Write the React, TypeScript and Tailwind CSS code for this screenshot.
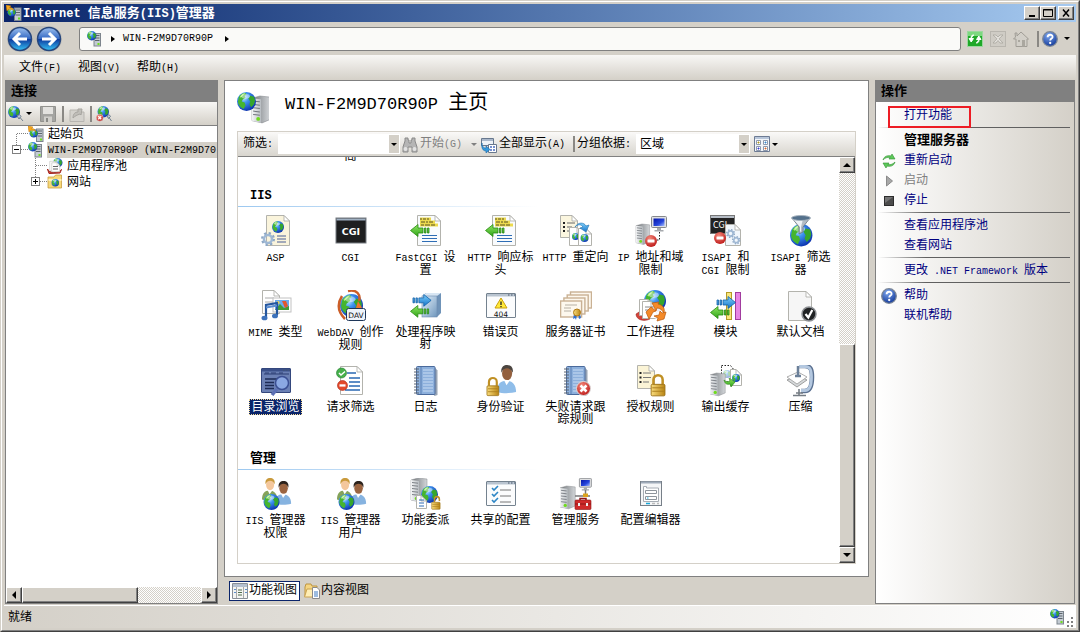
import React from "react";

type Kids = { children?: React.ReactNode };
type At = { x?: number; y?: number; s?: number };

/* Latin runs are set smaller so that each letter takes half the width of a Chinese one. */
function T({ t, latin = "text-[10px]" }: { t: string; latin?: string }) {
  return (
    <span className="whitespace-pre">
      {t.split(/([\x20-\x7e]+)/).map((p, i) =>
        i % 2 ? (
          <span key={i} className={latin}>
            {p}
          </span>
        ) : (
          p
        ),
      )}
    </span>
  );
}

/* ---------- drawing parts ---------- */

function Defs() {
  return (
    <svg className="absolute h-0 w-0" aria-hidden="true">
      <defs>
        <radialGradient id="sea" cx="0.35" cy="0.3" r="0.75">
          <stop offset="0" stopColor="#cdeeff" />
          <stop offset="0.35" stopColor="#3f95f0" />
          <stop offset="1" stopColor="#0a2fac" />
        </radialGradient>
        <linearGradient id="steel" x1="0" x2="1">
          <stop offset="0" stopColor="#f4f5f6" />
          <stop offset="1" stopColor="#b9bec3" />
        </linearGradient>
        <linearGradient id="side" x1="0" x2="1">
          <stop offset="0" stopColor="#6f7478" />
          <stop offset="1" stopColor="#d3d6d9" />
        </linearGradient>
        <linearGradient id="gold" x1="0" x2="1">
          <stop offset="0" stopColor="#f9dc7c" />
          <stop offset="1" stopColor="#b88413" />
        </linearGradient>
        <linearGradient id="nav" x1="0" x2="0" y1="0" y2="1">
          <stop offset="0" stopColor="#9dc0ee" />
          <stop offset="0.48" stopColor="#3469c4" />
          <stop offset="0.52" stopColor="#0d3b9f" />
          <stop offset="1" stopColor="#36c3f5" />
        </linearGradient>
        <linearGradient id="green" x1="0" x2="0" y1="0" y2="1">
          <stop offset="0" stopColor="#8fe663" />
          <stop offset="1" stopColor="#2fa317" />
        </linearGradient>
        <linearGradient id="blue" x1="0" x2="0" y1="0" y2="1">
          <stop offset="0" stopColor="#7fd0fb" />
          <stop offset="1" stopColor="#1373c9" />
        </linearGradient>
        <linearGradient id="cube" x1="0" x2="1" y1="0" y2="1">
          <stop offset="0" stopColor="#e6f1fb" />
          <stop offset="1" stopColor="#6f97bd" />
        </linearGradient>
        <linearGradient id="screen" x1="0" x2="1" y1="0" y2="1">
          <stop offset="0" stopColor="#0516a8" />
          <stop offset="0.6" stopColor="#2746dc" />
          <stop offset="1" stopColor="#a9c2ff" />
        </linearGradient>
        <radialGradient id="red" cx="0.4" cy="0.3" r="0.8">
          <stop offset="0" stopColor="#f58a7c" />
          <stop offset="1" stopColor="#b80f0f" />
        </radialGradient>
        <radialGradient id="help" cx="0.4" cy="0.25" r="0.8">
          <stop offset="0" stopColor="#7fa8ef" />
          <stop offset="1" stopColor="#0e3596" />
        </radialGradient>
      </defs>
    </svg>
  );
}

function Icon({ size = 32, children }: Kids & { size?: 16 | 32 }) {
  return (
    <svg
      viewBox="0 0 32 32"
      className={size === 16 ? "h-4 w-4 shrink-0" : "h-8 w-8 shrink-0"}
      aria-hidden="true"
    >
      {children}
    </svg>
  );
}

const place = ({ x = 0, y = 0, s = 1 }: At) => `translate(${x} ${y}) scale(${s})`;

const Globe = (p: At) => (
  <g transform={place(p)}>
    <circle cx="10" cy="10" r="10" fill="url(#sea)" />
    <path d="M2 5C4 2 7 1 9 1l1 2-2 1 1 2-3 2-1 2 3 1 1 3-2 4C3 16 1 13 1 10z" fill="#46b52f" />
    <path d="M14 4l4 1 1 4-1 4-3 3-2-3 1-3-2-3z" fill="#36a62c" />
    <path d="M3 5c2-3 4-4 6-4L7 3 4 6z" fill="#b4f088" />
    <ellipse cx="9" cy="4.500" rx="4.500" ry="2.500" fill="#fff" opacity="0.45" />
  </g>
);

const Server = (p: At) => (
  <g transform={place(p)}>
    <path d="M0 2L7 0l9 1v20l-7 3-9-2z" fill="url(#side)" stroke="#85898d" strokeWidth="0.5" />
    <path d="M0 2l8 1v21l-8-2z" fill="url(#steel)" />
    <path d="M1 4.500l6 .7M1 7.500l6 .7M1 10.500l6 .7M1 13.500l6 .7M1 16.500l6 .7" stroke="#71767c" strokeWidth="0.9" />
    <circle cx="5.500" cy="20.500" r="1.700" fill="#6fdc1c" />
  </g>
);

const Page = ({ x = 0, y = 0, w = 20, h = 26, fill = "#fff" }: At & { w?: number; h?: number; fill?: string }) => (
  <g transform={`translate(${x} ${y})`}>
    <path d={`M.5.5H${w - 6}L${w - 0.5} 6V${h - 0.5}H.5z`} fill={fill} stroke="#b3b3ad" />
    <path d={`M${w - 6} .5V6H${w - 0.5}z`} fill="#fff" stroke="#a9a9a4" strokeWidth="0.8" />
  </g>
);

const Arrow = ({ left = false, x = 0, y = 0, s = 1, fill = "url(#blue)", line = "#1160a8" }: At & { left?: boolean; fill?: string; line?: string }) => (
  <g transform={`translate(${left ? x + 20 * s : x} ${y}) scale(${left ? -s : s} ${s})`}>
    <path d="M1 4v5h1.500V4zM4 4v5h1.500V4zM7 4v5h5v3.500L19.500 6.500 12 .5V4z" fill={fill} stroke={line} strokeWidth="0.8" />
  </g>
);
const GreenLeft = (p: At) => <Arrow left fill="url(#green)" line="#27890f" {...p} />;

const NoEntry = (p: At) => (
  <g transform={place(p)}>
    <circle cx="6" cy="6" r="6" fill="url(#red)" />
    <rect x="2.500" y="4.500" width="7" height="3" rx="0.5" fill="#fff" />
  </g>
);

const Cross = (p: At) => (
  <g transform={place(p)}>
    <circle cx="7.500" cy="7.500" r="7" fill="url(#red)" stroke="#ddd" />
    <path d="M4.500 4.500l6 6M10.500 4.500l-6 6" stroke="#fff" strokeWidth="2.500" />
  </g>
);

const Lock = (p: At & { open?: boolean }) => (
  <g transform={place(p)}>
    <path d={p.open ? "M5 9V5a3 3.500 0 0 1 7 0v2" : "M3 9V5a4 4 0 0 1 8 0v4"} fill="none" stroke="#c09024" strokeWidth="2.200" />
    <rect x="1" y="9" width="12" height="10" rx="1" fill="url(#gold)" stroke="#9a6f12" strokeWidth="0.8" />
    <path d="M2 12h10M2 15h10" stroke="#a87b1c" strokeWidth="0.8" />
  </g>
);

const Monitor = (p: At) => (
  <g transform={place(p)}>
    <rect x="0.500" y="0.500" width="15" height="11" rx="1" fill="#dfe0e2" stroke="#85888c" />
    <rect x="2.500" y="2.500" width="11" height="7.500" fill="url(#screen)" />
    <path d="M6 12h4v2h2.500v1.500h-9V14H6z" fill="#a6a9ad" />
  </g>
);

const Person = ({ skin, hair, coat, ...p }: At & { skin: string; hair: string; coat: string }) => (
  <g transform={place(p)}>
    <path d="M0 24c0-7 3-10 8-10s9 3 9 10c-5 1.500-12 1.500-17 0z" fill={coat} />
    <path d="M6 13l2.500 5L12 13z" fill="#fff" />
    <ellipse cx="9" cy="7.500" rx="4.500" ry="6" fill={skin} />
    <path d="M4 7C3 2 6 0 9 0s6 2 5 7c-1-3-3-4-5-4S5 4 4 7z" fill={hair} />
  </g>
);

const Frame = ({ fill = "#fbfcfd", line = "#74828f", head = "#b9c4d0" }: { fill?: string; line?: string; head?: string }) => (
  <g>
    <rect x="1.500" y="3.500" width="29" height="24" rx="0.5" fill={fill} stroke={line} />
    <rect x="2" y="4" width="28" height="2.500" fill={head} />
    <path d="M23 5h1.500M26 5h1.500M29 5h1" stroke="#44546a" />
  </g>
);

const Notebook = () => (
  <g>
    <path d="M7 2.500h18l2.500 3V30l-3 1z" fill="#98a4b4" />
    <rect x="6.500" y="1.500" width="18.500" height="28" rx="1" fill="#8db0dc" stroke="#4a6a9c" />
    <path d="M11 2v27" stroke="#5b80b4" />
    <path d="M13 5h10M13 8h10M13 11h10M13 14h10M13 17h10M13 20h10M13 23h10M13 26h10" stroke="#c8dcf4" />
    <path d="M4 4h5M4 7h5M4 10h5M4 13h5M4 16h5M4 19h5M4 22h5M4 25h5M4 28h5" stroke="#5a6472" strokeWidth="1.200" />
  </g>
);

const Gear = (p: At) => (
  <g transform={place(p)} fill="none">
    <circle cx="7" cy="7" r="5.700" stroke="#8da7c4" strokeWidth="2.600" strokeDasharray="2.200 2.270" />
    <circle cx="7" cy="7" r="4" stroke="#9fb8d4" strokeWidth="2.600" />
  </g>
);

const YellowPage = () => (
  <g>
    <Page x={7} y={0} w={24} h={31} fill="#f9fbfd" />
    <path d="M10 4h11M10 7h15M10 10h18" stroke="#ecd94e" strokeWidth="2.800" />
    <path d="M10 4h2m1 0h3m1 0h2M11 7h4m1 0h2m1 0h4M11 10h3m1 0h5m1 0h4" stroke="#5a5322" strokeWidth="1" />
    <path d="M12 20.500h15M12 23.500h15M12 26.500h15" stroke="#2e6db5" strokeWidth="1.200" />
    <GreenLeft x={0} y={9} />
  </g>
);

const Admins = () => (
  <g>
    <Person x={2} y={0} s={0.9} skin="#f4c79c" hair="#c99a3c" coat="#84a35a" />
    <Person x={15} y={3} s={0.95} skin="#9b6440" hair="#2c221c" coat="#86b3e0" />
    <Globe x={3.500} y={16} s={0.8} />
  </g>
);

const iisParts = (
  <g>
    <Server x={15} y={4} s={1.120} />
    <Globe x={0} y={0} s={0.95} />
  </g>
);

const Iis = ({ size }: { size: 16 | 32 }) => <Icon size={size}>{iisParts}</Icon>;

/* Simplified server for small sizes, where the isometric one would blur. */
const TinyServer = ({ x, y }: { x: number; y: number }) => (
  <g transform={`translate(${x} ${y})`}>
    <rect x="1" y="1" width="13" height="25" fill="#c3cbd3" stroke="#7d858d" strokeWidth="2" />
    <path d="M3 5h9M3 10h9M3 15h9" stroke="#5c646c" strokeWidth="2" />
    <rect x="8" y="20" width="4" height="4" fill="#6fe01c" />
  </g>
);

const IisSmall = () => (
  <Icon size={16}>
    <TinyServer x={13} y={4} />
    <Globe x={0} y={0} s={0.95} />
  </Icon>
);

const IisStart = () => (
  <Icon size={16}>
    <TinyServer x={16} y={5} />
    <Globe x={3} y={6} s={0.85} />
    <path d="M0 0l10 2-3 3c5 0 8 2 9 6-4-3-8-3-11-2l-3 3z" fill="#f5a81c" stroke="#c07608" />
  </Icon>
);

const HelpIcon = () => (
  <svg viewBox="0 0 16 16" className="h-4 w-4 shrink-0" aria-hidden="true">
    <circle cx="8" cy="8" r="7.300" fill="url(#help)" stroke="#7b8697" strokeWidth="1.300" />
    <path d="M5.600 6.200C5.600 3 10.600 3 10.600 5.900 10.600 7.600 8.200 7.600 8.200 9.500" fill="none" stroke="#fff" strokeWidth="1.800" />
    <circle cx="8.200" cy="12" r="1.150" fill="#fff" />
  </svg>
);

/* ---------- feature icons ---------- */

const art: Record<string, React.ReactNode> = {
  asp: (
    <g>
      <Page x={6} y={0} w={24} h={31} fill="#faf4dc" />
      <Globe x={12} y={6} s={0.6} />
      <path d="M17 21h9M17 24h9M17 27h9" stroke="#4b5f95" strokeWidth="1.200" />
      <Gear x={1} y={17} />
    </g>
  ),
  cgi: (
    <g>
      <rect x="1" y="3" width="30" height="25" fill="#1e1f20" stroke="#777c82" />
      <rect x="1.500" y="3.500" width="29" height="2" fill="#9fb0c2" />
      <text x="16" y="20" textAnchor="middle" fill="#fff" fontFamily="DejaVu Sans" fontWeight="700" fontSize="9.500">CGI</text>
    </g>
  ),
  yellow: <YellowPage />,
  redirect: (
    <g>
      <Page x={0} y={0} w={18} h={23} fill="#fbf6df" />
      <path d="M7 8h8M7 12h5M7 16h3" stroke="#666" />
      <path d="M3 8h2M3 12h2M3 16h2" stroke="#222" strokeWidth="2" />
      <Page x={9} y={12} w={14} h={19} />
      <Globe x={12} y={18} s={0.35} />
      <Page x={18} y={13} w={14} h={18} />
      <Globe x={20.500} y={19} s={0.4} />
      <path d="M15 12c3-5 9-5 11-1l3-1-3 7-6-4 3-1c-2-3-5-3-8 0z" fill="url(#blue)" stroke="#2f7bb8" strokeWidth="0.700" />
    </g>
  ),
  ip: (
    <g>
      <Server x={1} y={9} s={0.85} />
      <Monitor x={16} y={1} />
      <path d="M24.500 17v8h-5" stroke="#222" strokeDasharray="1.500 1.500" fill="none" />
      <NoEntry x={10} y={20} />
    </g>
  ),
  isapi: (
    <g>
      <rect x="0.500" y="0.500" width="24" height="18" fill="#222" stroke="#777" />
      <rect x="1" y="1" width="23" height="2" fill="#b6bdc6" />
      <text x="3" y="13" fill="#fff" fontFamily="DejaVu Sans" fontWeight="400" fontSize="8">CGI</text>
      <Page x={15} y={9} w={16} h={22} fill="#f2f7fc" />
      <Gear x={16} y={14} s={0.65} />
      <Gear x={22} y={21} s={0.6} />
      <NoEntry x={4} y={17} />
    </g>
  ),
  filter: (
    <g>
      <Globe x={5} y={9} s={1.120} />
      <path d="M7 3l7 9v7l4-2v-5l7-9z" fill="#b3bcc5" stroke="#68727d" strokeWidth="0.800" />
      <path d="M9 5l6 7v5l1-1v-4l2-8z" fill="#eef2f5" />
      <ellipse cx="16" cy="3" rx="9.500" ry="2.500" fill="#54718c" stroke="#a8b4bf" />
    </g>
  ),
  mime: (
    <g>
      <Page x={2} y={0} w={18} h={24} />
      <path d="M5 8h9M5 12h9" stroke="#aaa" />
      <rect x="13" y="8" width="18" height="14" fill="#fff" stroke="#c2c2c2" />
      <rect x="15" y="10" width="14" height="10" fill="#6ba9ee" />
      <path d="M15 20l5-6 4 4 5-2v4z" fill="#419b37" />
      <path d="M22 11h4l2 5-3 2z" fill="#e2562e" />
      <circle cx="18" cy="12.500" r="1.500" fill="#f6dd4f" />
      <path d="M6 27V15l11-2v12" fill="none" stroke="#24569e" strokeWidth="2.200" />
      <path d="M6 17.500l11-2" stroke="#5b8dd0" strokeWidth="2" />
      <ellipse cx="4.500" cy="28" rx="3" ry="2.300" fill="#3d72bb" />
      <ellipse cx="15" cy="26" rx="3" ry="2.300" fill="#3d72bb" />
    </g>
  ),
  webdav: (
    <g>
      <Globe x={5} y={4} s={1.150} />
      <path d="M13 1c9-2 13 4 11 10M7 6C2 14 3 22 10 29" fill="none" stroke="#cc5e28" strokeWidth="2.500" />
      <path d="M21 18l2-7 4 7z" fill="#f0742d" />
      <rect x="11.500" y="18.500" width="19" height="12" rx="2" fill="#eef4fb" stroke="#1f3658" />
      <text x="21" y="27.500" textAnchor="middle" fontFamily="DejaVu Sans" fontSize="7.500" fill="#111">DAV</text>
    </g>
  ),
  handler: (
    <g>
      <path d="M12 6l4-3h15v20l-4 4H12z" fill="#6f93b8" />
      <path d="M12 6l4-3h15l-4 3z" fill="#d8e6f3" />
      <rect x="12" y="6" width="15" height="21" fill="url(#cube)" stroke="#6b8bad" strokeWidth="0.600" />
      <Arrow x={2} y={4} s={0.98} />
      <GreenLeft x={0} y={15} s={0.98} />
    </g>
  ),
  err: (
    <g>
      <Frame />
      <path d="M16 8l6 10H10z" fill="#ffe93a" stroke="#caa00c" strokeLinejoin="round" />
      <path d="M16 11.500v3.500M16 16v1.200" stroke="#222" strokeWidth="1.300" />
      <text x="16" y="26.500" textAnchor="middle" fontFamily="DejaVu Sans" fontSize="7.500" fill="#111">404</text>
    </g>
  ),
  certs: (
    <g>
      {[0, 1, 2, 3].map((i) => (
        <rect key={i} x={10.500 - i * 3.300} y={2 + i * 3} width="21" height="16" fill="#fdf8ee" stroke="#c9b194" strokeWidth="1.400" />
      ))}
      <path d="M5 15h12M4 18h7M4 21h7" stroke="#b6b0a4" />
      <path d="M14 24l-1 5 2-1 1 2 1-5zM18 24l1 5 2-1-1-4z" fill="#2f6fd0" />
      <circle cx="17" cy="22.500" r="3.500" fill="url(#gold)" stroke="#b17912" />
    </g>
  ),
  worker: (
    <g>
      <path d="M1 24c0 6 8 8 14 5l-3-3c-5 1-7-1-8-4z" fill="#d2433a" stroke="#8d1d17" strokeWidth="0.500" />
      <Globe x={9} y={0} s={1.100} />
      <Page x={4} y={9} w={15} h={17} />
      <Page x={7} y={11} w={15} h={18} />
      <path d="M10 17h8M10 20h6" stroke="#888" />
      <ellipse cx="23" cy="23" rx="7" ry="6" fill="#fff" opacity="0.9" />
      <path d="M17 13l7-1-1 2c5 1 7 4 6 9-2-3-4-5-7-5l-1 3z" fill="#f58a28" stroke="#b95708" strokeWidth="0.700" />
      <path d="M31 22l-2 7-7 2 1-3-4-2 5-1 1-4 2 2z" fill="#f58a28" stroke="#b95708" strokeWidth="0.700" />
      <path d="M14 29l-3-7 5-5 5 4-3 1c-1 2-2 4-4 7z" fill="#f58a28" stroke="#b95708" strokeWidth="0.700" />
    </g>
  ),
  modules: (
    <g>
      <rect x="16.500" y="2.500" width="5" height="27" fill="#f8e57d" stroke="#b49a26" />
      <rect x="25.500" y="2.500" width="5" height="27" fill="#e784e4" stroke="#a13c9e" />
      <Arrow x={6} y={6} />
      <GreenLeft x={0} y={16} />
    </g>
  ),
  defdoc: (
    <g>
      <Page x={3} y={1} w={24} h={30} fill="#f6f6f6" />
      <circle cx="24" cy="24" r="7" fill="#202224" stroke="#8d9094" strokeWidth="1.500" />
      <path d="M20.500 24l2.800 3.500 4-7.500" fill="none" stroke="#fff" strokeWidth="2.200" />
    </g>
  ),
  browse: (
    <g>
      <Frame fill="#6b80b4" line="#34477d" head="#3b5089" />
      <path d="M4 9h25M5 8h4m2 0h5m3 0h4" stroke="#2b3d72" />
      <path d="M5 14h12M5 17.500h9M5 20.500h9M5 23.500h9" stroke="#1d2b55" strokeWidth="1.300" />
      <path d="M17 24l-5 6" stroke="#5c70b4" strokeWidth="3.500" />
      <circle cx="22" cy="18" r="6.500" fill="#8ba8e2" stroke="#3b4f93" strokeWidth="1.500" />
    </g>
  ),
  reqfilter: (
    <g>
      <Page x={5} y={1} w={23} h={29} />
      <path d="M12 8h9M14 13h11M14 17h11M14 21h11M10 25h15" stroke="#2a68b2" strokeWidth="1.300" />
      <circle cx="6.500" cy="8" r="5" fill="#46b04b" stroke="#1f7a2a" strokeWidth="0.600" />
      <path d="M4 8l2 2 4-3.500" fill="none" stroke="#fff" strokeWidth="1.500" />
      <circle cx="7.500" cy="20.500" r="5" fill="#e34a2c" stroke="#a92411" strokeWidth="0.600" />
      <rect x="4.500" y="19.300" width="6" height="2.300" fill="#fff" />
    </g>
  ),
  log: <Notebook />,
  auth: (
    <g>
      <Person x={12} y={0} s={1.120} skin="#93603e" hair="#4b4540" coat="#8fbde9" />
      <Lock x={1} y={12} s={0.98} />
    </g>
  ),
  failed: (
    <g>
      <Notebook />
      <Cross x={16} y={16} />
    </g>
  ),
  authz: (
    <g>
      <Page x={2} y={0} w={18} h={24} fill="#fbf4d6" />
      <path d="M8 8h8M8 12.500h8M8 17h6" stroke="#777" />
      <path d="M4.500 8h2M4.500 12.500h2M4.500 17h2" stroke="#222" strokeWidth="2" />
      <Lock x={15} y={9} s={1.150} />
    </g>
  ),
  cache: (
    <g>
      <path d="M11.500.5h9l4 5V17h-13z" fill="#fff" stroke="#222" strokeDasharray="1.500 1.500" />
      <g opacity="0.4">
        <Globe x={13} y={5} s={0.4} />
      </g>
      <Server x={0} y={8} s={0.95} />
      <Page x={20} y={4} w={12} h={17} />
      <Globe x={22} y={9} s={0.4} />
      <path d="M14 15c2 2 4 2 6 1l-1-3 6 4-4 5-1-3c-3 1-5 0-6-4z" fill="url(#green)" stroke="#287f14" strokeWidth="0.600" />
    </g>
  ),
  compress: (
    <g>
      <path d="M14 1h6c6 0 7 4 7 11s-1 14-7 14h-4" fill="none" stroke="#5b7191" strokeWidth="4.500" />
      <path d="M14 1.500h6c5.500 0 6.500 4 6.500 10.500S25.500 25.500 20 25.500h-4" fill="none" stroke="#b4c8e0" strokeWidth="2.800" />
      <path d="M2 15l11-5 9 5-10 7z" fill="#d5d8da" stroke="#8a8a8a" strokeWidth="0.800" />
      <path d="M2 12l11-5 9 5-10 7z" fill="#fff" stroke="#9a9a9a" strokeWidth="0.800" />
      <path d="M13 1v9M10 11h6" stroke="#6c8099" strokeWidth="2.500" />
      <path d="M14 24v6M8 30.500h13M11 28h7" stroke="#757c84" strokeWidth="1.600" />
    </g>
  ),
  admins: <Admins />,
  delegation: (
    <g>
      <Server x={1} y={0} s={1} />
      <Globe x={11} y={8} s={0.85} />
      <Page x={6} y={17} w={11} h={14} />
      <path d="M9 22h5M9 25h5M9 28h5" stroke="#2e6db5" />
      <Lock x={21} y={18} s={0.7} open />
    </g>
  ),
  shared: (
    <g>
      <Frame />
      <path d="M7 10l2 2 4-4M7 16l2 2 4-4M7 22l2 2 4-4" fill="none" stroke="#2d86c6" strokeWidth="1.600" />
      <path d="M15 12h11M15 18h11M15 24h11" stroke="#777" />
    </g>
  ),
  service: (
    <g>
      <Server x={0} y={8} s={0.95} />
      <Monitor x={19} y={0} s={0.8} />
      <path d="M15 18h15M25.500 12v6" stroke="#777" strokeWidth="1.500" />
      <rect x="23" y="15.500" width="5" height="3.500" fill="#dba31c" />
      <path d="M20 22v-1.500h6V22" fill="none" stroke="#8d1717" strokeWidth="1.500" />
      <rect x="15" y="22" width="16" height="9.500" rx="1" fill="#cf2a2a" stroke="#8d1717" strokeWidth="0.600" />
      <path d="M15 26h16" stroke="#8d1717" />
      <path d="M18 25h2v3h-2zM26 25h2v3h-2z" fill="#eee" />
    </g>
  ),
  editor: (
    <g>
      <rect x="5.500" y="3.500" width="21" height="24" fill="#f5f6f7" stroke="#777f88" />
      <path d="M6 4.500h20" stroke="#9fabb9" strokeWidth="2" />
      <path d="M8.500 23.500V8.500h3v1.500h12v13.500z" fill="#fff" stroke="#a7adb4" />
      <path d="M10.500 12.500h11v3h-11zM10.500 18.500h11v3h-11z" fill="#fff" stroke="#8e959c" />
      <path d="M12 20h1.500" stroke="#18a7d8" />
      <path d="M11 25.500h4" stroke="#18a7d8" strokeWidth="1.500" />
      <path d="M17 25.500h3M22 25.500h2" stroke="#bbb" strokeWidth="1.500" />
    </g>
  ),
};

const iisItems: [string, string[]][] = [
  ["asp", ["ASP"]],
  ["cgi", ["CGI"]],
  ["yellow", ["FastCGI 设", "置"]],
  ["yellow", ["HTTP 响应标", "头"]],
  ["redirect", ["HTTP 重定向"]],
  ["ip", ["IP 地址和域", "限制"]],
  ["isapi", ["ISAPI 和", "CGI 限制"]],
  ["filter", ["ISAPI 筛选", "器"]],
  ["mime", ["MIME 类型"]],
  ["webdav", ["WebDAV 创作", "规则"]],
  ["handler", ["处理程序映", "射"]],
  ["err", ["错误页"]],
  ["certs", ["服务器证书"]],
  ["worker", ["工作进程"]],
  ["modules", ["模块"]],
  ["defdoc", ["默认文档"]],
  ["browse", ["目录浏览"]],
  ["reqfilter", ["请求筛选"]],
  ["log", ["日志"]],
  ["auth", ["身份验证"]],
  ["failed", ["失败请求跟", "踪规则"]],
  ["authz", ["授权规则"]],
  ["cache", ["输出缓存"]],
  ["compress", ["压缩"]],
];

const adminItems: [string, string[]][] = [
  ["admins", ["IIS 管理器", "权限"]],
  ["admins", ["IIS 管理器", "用户"]],
  ["delegation", ["功能委派"]],
  ["shared", ["共享的配置"]],
  ["service", ["管理服务"]],
  ["editor", ["配置编辑器"]],
];

/* ---------- widgets ---------- */

function Down({ tone = "border-t-black" }: { tone?: string }) {
  return <span className={`block h-0 w-0 border-x-3 border-t-3 border-x-transparent ${tone}`} />;
}

function Sep() {
  return <span className="h-4 w-0.5 shrink-0 bg-[#8a8884]" />;
}

const bevel =
  "border border-t-white border-l-white border-r-[#404040] border-b-[#404040] bg-[#d4d0c8] shadow-[inset_-1px_-1px_0_#808080]";
const checker =
  "bg-[conic-gradient(#d4d0c8_25%,#fff_0_50%,#d4d0c8_0_75%,#fff_0)] bg-[length:2px_2px]";

function ScrollButton({ label, d }: { label: string; d: string }) {
  return (
    <button type="button" aria-label={label} className={`flex h-4 w-4 shrink-0 items-center justify-center ${bevel}`}>
      <svg viewBox="0 0 8 8" className="h-2 w-2">
        <path d={d} fill="#000" />
      </svg>
    </button>
  );
}

function WindowButton({ label, children }: Kids & { label: string }) {
  return (
    <button type="button" aria-label={label} className={`flex h-3.5 w-4 items-center justify-center ${bevel}`}>
      <svg viewBox="0 0 12 10" className="h-2.5 w-3" fill="none" stroke="#000">
        {children}
      </svg>
    </button>
  );
}

function Section({ title, items, selected }: { title: string; items: [string, string[]][]; selected?: string }) {
  return (
    <section>
      <h2 className="flex h-[31px] items-end pb-0.5 pl-3 text-[13px] leading-4 font-bold">
        <T t={title} latin="text-[12px]" />
      </h2>
      <div className="mb-1.5 h-px bg-linear-to-r from-[#9cc8f0] to-transparent to-50%" />
      <div className="flex flex-wrap">
        {items.map(([icon, lines], i) => (
          <button key={i} type="button" className="flex h-[75px] w-[75px] flex-col items-center gap-0.5 pt-0.5">
            <Icon>{art[icon]}</Icon>
            <span
              className={
                icon === selected
                  ? "border border-dotted border-[#f5db95] bg-[#0a246a] px-px pt-0.5 text-white"
                  : "pt-[3px]"
              }
            >
              {lines.map((l) => (
                <span key={l} className="block leading-3">
                  <T t={l} />
                </span>
              ))}
            </span>
          </button>
        ))}
      </div>
    </section>
  );
}

function Expander({ open }: { open: boolean }) {
  return (
    <g>
      <rect x="6.500" y="3.500" width="8" height="8" fill="#fff" stroke="#808080" />
      <path d={open ? "M8 7.500h5" : "M8 7.500h5M10.500 5v5"} stroke="#000" />
    </g>
  );
}

function TreeRow({ indent = false, lines, icon, text, open, active }: { indent?: boolean; lines: string; icon: React.ReactNode; text: string; open?: boolean; active?: boolean }) {
  return (
    <li className={`flex h-4 items-center ${indent ? "pl-[19px]" : ""}`}>
      <svg viewBox="0 0 22 16" className="h-4 w-[22px] shrink-0">
        <path d={lines} fill="none" stroke="#808080" strokeDasharray="1 1" />
        {open !== undefined && <Expander open={open} />}
      </svg>
      {icon}
      <button type="button" className={`ml-[3px] flex h-4 min-w-0 flex-1 items-center overflow-hidden pt-px pl-px text-left ${active ? "bg-[#d4d0c8]" : ""}`}>
        <T t={text} />
      </button>
    </li>
  );
}

function Action({ icon, text, disabled = false, boxed = false }: { icon?: React.ReactNode; text: string; disabled?: boolean; boxed?: boolean }) {
  return (
    <li className="relative flex h-5 items-center pt-0.5 pl-[5px]">
      <span className="mr-[7px] flex w-4 justify-center">{icon}</span>
      {disabled ? <span className="text-[#808080]">{text}</span> : (
        <a href="#" className="text-[#000080]">
          <T t={text} />
        </a>
      )}
      {boxed && <span className="pointer-events-none absolute top-px left-3 h-[22px] w-[83px] border-2 border-[#ed1c24]" />}
    </li>
  );
}

const Rule = () => <li aria-hidden="true" className="my-0.5 mr-1 ml-0.5 h-px bg-linear-to-r from-transparent to-[#606060] to-25%" />;

function PanelTitle({ children }: Kids) {
  return <h2 className="h-[21px] shrink-0 bg-[#808080] pl-[5px] text-[13px] leading-[22px] font-bold">{children}</h2>;
}

function RoundNav({ label, d }: { label: string; d: string }) {
  return (
    <button type="button" aria-label={label}>
      <svg viewBox="0 0 26 26" className="h-[26px] w-[26px]">
        <circle cx="13" cy="13" r="11.500" fill="url(#nav)" stroke="#27467c" strokeWidth="1.500" />
        <path d={d} fill="none" stroke="#fff" strokeWidth="3" />
      </svg>
    </button>
  );
}

export default function App() {
  return (
    <div className="h-screen border border-t-[#d4d0c8] border-r-[#404040] border-b-[#404040] border-l-[#d4d0c8] font-['Liberation_Mono','Noto_Sans_CJK_SC',monospace] text-[12px] leading-4 text-black">
      <Defs />
      <div className="flex h-full flex-col border border-t-white border-r-[#808080] border-b-[#808080] border-l-white bg-[#d4d0c8] p-0.5">
        <header className="flex h-[18px] shrink-0 items-center bg-linear-to-r from-[#0a246a] to-[#a6caf0] pr-0.5 pl-0.5">
          <IisStart />
          <h1 className="flex-1 pt-px pl-px text-[13px] font-bold text-white">
            <T t="Internet 信息服务(IIS)管理器" latin="text-[12px]" />
          </h1>
          <WindowButton label="最小化">
            <path d="M3 8h6" strokeWidth="2" />
          </WindowButton>
          <WindowButton label="最大化">
            <path d="M1.500 1.500h9v7h-9zM1 2h10" />
          </WindowButton>
          <span className="w-0.5" />
          <WindowButton label="关闭">
            <path d="M3 1.500l6 7M9 1.500l-6 7" strokeWidth="1.500" />
          </WindowButton>
        </header>

        <div className="flex h-[33px] shrink-0 items-center pl-[3px]">
          <div className="flex items-center gap-[3px] rounded-full bg-[#c2c0ba]">
            <RoundNav label="后退" d="M20 13H8M13 7l-6 6 6 6" />
            <RoundNav label="前进" d="M6 13h12M13 7l6 6-6 6" />
          </div>
          <nav aria-label="地址" className="ml-[17px] flex h-6 flex-1 items-center rounded-[3px] border border-[#808080] bg-[#fafaf8] pl-[7px]">
            <IisSmall />
            <span className="mx-2 h-0 w-0 border-y-3 border-l-4 border-y-transparent border-l-black" />
            <button type="button">
              <T t="WIN-F2M9D70R90P" />
            </button>
            <span className="ml-3 h-0 w-0 border-y-3 border-l-4 border-y-transparent border-l-black" />
          </nav>
          <div className="flex items-center pr-1.5 pl-1.5">
            <button type="button" aria-label="刷新" className="mr-[7px]">
              <svg viewBox="0 0 16 16" className="h-4 w-4">
                <rect x="0.500" y="0.500" width="15" height="15" fill="#1fa828" stroke="#9bd89e" />
                <path d="M1 1h14v4H1z" fill="#7dd880" />
                <path d="M7 4C4 4 4 6 4 8M2 7.500h4.500L4.200 11zM9 12c3 0 3-2 3-4M9.500 8.500H14L11.800 5z" fill="#fff" stroke="#fff" />
              </svg>
            </button>
            <button type="button" aria-label="停止加载" disabled className="mr-[7px]">
              <svg viewBox="0 0 16 16" className="h-4 w-4">
                <rect x="0.500" y="0.500" width="15" height="15" fill="#cfccc5" stroke="#b9b6af" />
                <path d="M3 4l4 3.800L3 12h3l2-2.500L10 12h3L9 7.800 13 4h-3L8 6 6 4z" fill="#e4e2dd" stroke="#aaa79f" strokeWidth="0.800" />
              </svg>
            </button>
            <button type="button" aria-label="主页" disabled className="mr-2">
              <svg viewBox="0 0 16 16" className="h-4 w-4">
                <path d="M2 2h2v3L8 1l7.500 7H14v7.500H3V8H.5l2-2z" fill="#d2cfc8" stroke="#a09d96" />
                <path d="M9 9h3v6.500H9zM5 9h2v2H5z" fill="#aaa79f" />
              </svg>
            </button>
            <Sep />
            <button type="button" aria-label="帮助" className="ml-[3px] flex items-center gap-1.5">
              <HelpIcon />
              <Down />
            </button>
          </div>
        </div>

        <nav className="flex h-[25px] shrink-0 items-center gap-[17px] bg-linear-to-b from-[#f8f7f5] to-[#d4d0c8] pt-0.5 pl-[15px]">
          {["文件(F)", "视图(V)", "帮助(H)"].map((m) => (
            <button key={m} type="button">
              <T t={m} />
            </button>
          ))}
        </nav>

        <main className="flex min-h-0 flex-1 gap-1.5 px-px">
          <aside className="flex w-[213px] shrink-0 flex-col border border-[#808080] bg-white">
            <PanelTitle>连接</PanelTitle>
            <div className="flex h-6 shrink-0 items-center border-b border-[#808080] bg-linear-to-b from-[#f8f7f5] to-[#d4d0c8] pl-0.5">
              <button type="button" aria-label="创建新的连接" className="mr-2 flex items-center gap-0.5">
                <Icon size={16}>
                  <Globe x={0} y={0} s={1.200} />
                  <path d="M18 20l5-3 3 4-4 5zM24 23l6 7" fill="#b9c8d6" stroke="#71808e" strokeWidth="2" />
                </Icon>
                <Down />
              </button>
              <button type="button" aria-label="保存连接" disabled className="mr-1.5">
                <svg viewBox="0 0 16 16" className="h-4 w-4">
                  <path d="M.5.5h15v15H.5z" fill="#a4a4a1" stroke="#92928e" />
                  <path d="M3 1h10v7H3z" fill="#e3e2df" />
                  <path d="M4 10.500h8V16H4z" fill="#d0cfcb" />
                  <path d="M6 12h2v4H6z" fill="#8a8a86" />
                </svg>
              </button>
              <Sep />
              <button type="button" aria-label="向上" disabled className="mx-[5px]">
                <svg viewBox="0 0 16 16" className="h-4 w-4">
                  <path d="M1 4h9l1 2h4v9.500H1z" fill="#d4d2cd" stroke="#b7b5b0" />
                  <path d="M4 12c0-4 2-6 5-6V3h4l-1 6-1-1c-3 1-5 2-7 4z" fill="#c0beb9" stroke="#a7a5a0" />
                </svg>
              </button>
              <Sep />
              <button type="button" aria-label="删除连接" className="ml-1">
                <Icon size={16}>
                  <Globe x={3} y={0} s={1.150} />
                  <path d="M22 20l4-3 3 4-4 4zM26 23l5 7" fill="#b9c8d6" stroke="#71808e" strokeWidth="2" />
                  <Cross x={0} y={16} />
                </Icon>
              </button>
            </div>
            <ul className="flex-1 overflow-hidden">
              <TreeRow lines="M11 7.500h11M10.500 8v8" icon={<IisStart />} text="起始页" />
              <TreeRow lines="M10.500 0v4M15 7.500h7" icon={<IisSmall />} text="WIN-F2M9D70R90P (WIN-F2M9D70" open active />
              <TreeRow
                indent
                lines="M10.500 0v16M11 7.500h11"
                text="应用程序池"
                icon={
                  <Icon size={16}>
                    <path d="M1 22c2 9 22 9 28 1l-3 7-22 1z" fill="#dd4d43" stroke="#9e2018" strokeWidth="2" />
                    <Globe x={12} y={0} s={0.95} />
                    <Page x={5} y={6} w={18} h={20} />
                    <Page x={9} y={9} w={17} h={19} />
                    <path d="M12 17h10M12 22h10" stroke="#666" strokeWidth="2" />
                  </Icon>
                }
              />
              <TreeRow
                indent
                open={false}
                lines="M10.500 0v4M15 7.500h7"
                text="网站"
                icon={
                  <Icon size={16}>
                    <path d="M2 6h12l3-4h12v26H2z" fill="#f7d978" stroke="#c49a3a" strokeWidth="1.500" />
                    <path d="M3 10h26v4H3z" fill="#fff0b8" />
                    <Globe x={9} y={10} s={0.75} />
                  </Icon>
                }
              />
            </ul>
            <div className={`flex h-4 shrink-0 ${checker}`}>
              <ScrollButton label="向左滚动" d="M6 0v8L2 4z" />
              <div className={`w-[116px] ${bevel}`} />
              <div className="flex-1" />
              <ScrollButton label="向右滚动" d="M2 0v8l4-4z" />
            </div>
          </aside>

          <div className="flex min-w-0 flex-1 flex-col">
            <div className="flex min-h-0 flex-1 flex-col border border-[#808080] bg-white px-3 pb-3">
              <div className="flex h-[50px] shrink-0 items-center gap-4">
                <span className="flex pt-1">
                  <Iis size={32} />
                </span>
                <h2 className="pb-1 text-[20px] leading-6">
                  <T t="WIN-F2M9D70R90P 主页" latin="text-[17px]" />
                </h2>
              </div>
              <div className="flex min-h-0 flex-1 flex-col border border-[#d4d0c8]">
                <div className="flex h-[25px] shrink-0 items-center border-b border-[#808080] bg-linear-to-b from-[#faf9f8] to-[#d8d5ce] pl-[5px]">
                  <label htmlFor="filter" className="w-[35px] pt-px">
                    <T t="筛选:" />
                  </label>
                  <input id="filter" className="h-5 w-[111px] bg-white px-1 outline-none" />
                  <button type="button" aria-label="筛选历史" className="flex h-5 w-[11px] items-center justify-center border-y border-r border-white bg-[#d4d0c8]">
                    <Down />
                  </button>
                  <button type="button" disabled className="ml-0.5 flex items-center gap-0.5 pt-px text-[#808080]">
                    <svg viewBox="0 0 16 16" className="h-4 w-4">
                      <path d="M3 1h3v2h1v3h2V3h1V1h3v3l2 6v5h-5v-5H6v5H1v-5l2-6z" fill="#b5b5b5" stroke="#8a8a8a" />
                      <circle cx="3.500" cy="12" r="2" fill="#e2e2e2" />
                      <circle cx="12.500" cy="12" r="2" fill="#e2e2e2" />
                    </svg>
                    <T t="开始(G)" />
                    <span className="ml-[7px]">
                      <Down tone="border-t-[#808080]" />
                    </span>
                  </button>
                  <button type="button" className="mr-2 ml-1 flex items-center gap-0.5 pt-px">
                    <svg viewBox="0 0 16 16" className="h-4 w-4">
                      <path d="M.5 1.500h12v7H.5z" fill="#eef2f7" stroke="#68788e" />
                      <path d="M1 3h11" stroke="#a9b7ca" strokeWidth="2" />
                      <path d="M7.500 7.500h8v8h-8z" fill="#fff" stroke="#68788e" />
                      <path d="M9 10h2m1 0h2M9 13h2m1 0h2" stroke="#4a6cc0" strokeWidth="1.500" />
                      <path d="M1 6c0 4 2 5 4 5V9l4 3.500L5 16v-2C2 14 0 11 1 6z" fill="#3498dc" stroke="#1b6aa8" strokeWidth="0.600" />
                    </svg>
                    <T t="全部显示(A)" />
                  </button>
                  <Sep />
                  <label htmlFor="group" className="ml-0.5 w-[59px] pt-px">
                    <T t="分组依据:" />
                  </label>
                  <span className="relative flex">
                    <select id="group" defaultValue="area" className="h-5 w-[114px] appearance-none bg-white pt-px pl-1 outline-none">
                      <option value="area">区域</option>
                    </select>
                    <span className="pointer-events-none absolute inset-y-px right-px flex w-2.5 items-center justify-center bg-[#d4d0c8]">
                      <Down />
                    </span>
                  </span>
                  <button type="button" aria-label="视图" className="ml-1 flex items-center gap-0.5">
                    <svg viewBox="0 0 16 16" className="h-4 w-4">
                      <path d="M.5.5h15v15H.5z" fill="#f3f5f8" stroke="#6d7b93" />
                      <path d="M1 2h14" stroke="#b8c6da" strokeWidth="2" />
                      <path d="M2.500 4.500h4v4h-4zM9.500 4.500h4v4h-4zM2.500 10.500h4v4h-4zM9.500 10.500h4v4h-4z" fill="#fff" stroke="#8d99ad" />
                      <path d="M4 6h1v1H4z" stroke="#b09a22" />
                      <path d="M11 6h1v1h-1z" stroke="#3c8fd8" />
                      <path d="M4 12h1v1H4z" stroke="#3a3fd8" />
                      <path d="M11 12h1v1h-1z" stroke="#e07038" />
                    </svg>
                    <Down />
                  </button>
                </div>
                <div className="flex min-h-0 flex-1">
                  <div className="min-w-0 flex-1 overflow-hidden">
                    <div className="flex h-[18px] overflow-hidden pl-[75px]">
                      <span className="-mt-1.5 w-[75px] text-center leading-3">阁</span>
                    </div>
                    <Section title="IIS" items={iisItems} selected="browse" />
                    <Section title="管理" items={adminItems} />
                  </div>
                  <div className={`flex w-4 shrink-0 flex-col ${checker}`}>
                    <ScrollButton label="向上滚动" d="M0 6h8L4 2z" />
                    <div className="grow-[172]" />
                    <div className={`grow-[202] ${bevel}`} />
                    <ScrollButton label="向下滚动" d="M0 2h8L4 6z" />
                  </div>
                </div>
              </div>
            </div>
            <div className="flex h-[27px] shrink-0 items-center gap-1 pl-[5px]">
              <button type="button" className="flex h-5 items-center gap-px border border-[#0a246a] bg-white px-0.5">
                <svg viewBox="0 0 16 16" className="h-4 w-4">
                  <path d="M.5.5h15v15H.5z" fill="#f4f4f2" stroke="#8a8f96" />
                  <path d="M1 2.500h14" stroke="#b5c0cf" strokeWidth="3" />
                  <path d="M4.500 4v11M11.500 4v11" stroke="#aaa" />
                  <path d="M6 7h4M6 9.500h4M6 12h4" stroke="#4f6a4a" />
                  <path d="M2 6.500h2M2 9.500h2M13 6.500h2M13 9.500h2" stroke="#5f8fcc" />
                </svg>
                <span className="pt-px">功能视图</span>
              </button>
              <button type="button" className="flex h-5 items-center gap-px">
                <svg viewBox="0 0 16 16" className="h-4 w-4">
                  <path d="M1 4l1-3h5l1 2h5v10H1z" fill="#f5d581" stroke="#bd9440" />
                  <path d="M.5 14L3 6h9l-2 8z" fill="#ffeeb5" stroke="#c9a252" />
                  <path d="M8.500 4.500H13l2.500 2.500v8.500h-7z" fill="#fff" stroke="#8b8b8b" />
                  <path d="M10 9h4M10 11h4M10 13h4" stroke="#3a78c0" />
                </svg>
                <span className="pt-px">内容视图</span>
              </button>
            </div>
          </div>

          <aside className="flex w-[200px] shrink-0 flex-col border border-[#808080] bg-linear-to-r from-white to-[#d4d0c8]">
            <PanelTitle>操作</PanelTitle>
            <ul className="pt-[3px]">
              <Action text="打开功能" boxed />
              <Rule />
              <li className="h-5 pl-7 text-[13px] leading-[22px] font-bold">管理服务器</li>
              <Action
                text="重新启动"
                icon={
                  <svg viewBox="0 0 16 16" className="h-4 w-4">
                    <path d="M2 7c1-4 5-5 8-4l1-2 3 5H8l1-1.500C6 4 4 5 2 7z" fill="#5dc95a" stroke="#2f8f30" strokeWidth="0.600" />
                    <path d="M14 9c-1 4-5 5-8 4l-1 2-3-5h6L7 11.500c3 .5 5-.5 7-2.500z" fill="#5dc95a" stroke="#2f8f30" strokeWidth="0.600" />
                  </svg>
                }
              />
              <Action
                text="启动"
                disabled
                icon={
                  <svg viewBox="0 0 16 16" className="h-4 w-4">
                    <path d="M5.500 3l6 5-6 5z" fill="#a8a8a8" stroke="#8b8b8b" />
                  </svg>
                }
              />
              <Action
                text="停止"
                icon={
                  <svg viewBox="0 0 16 16" className="h-4 w-4">
                    <rect x="3.500" y="3.500" width="9" height="9" fill="#4c4c4c" stroke="#2d2d2d" />
                    <path d="M4 4h8L4 10z" fill="#757575" />
                  </svg>
                }
              />
              <Rule />
              <Action text="查看应用程序池" />
              <Action text="查看网站" />
              <Rule />
              <Action text="更改 .NET Framework 版本" />
              <Rule />
              <Action text="帮助" icon={<HelpIcon />} />
              <Action text="联机帮助" />
            </ul>
          </aside>
        </main>

        <footer className="mt-px flex h-[23px] shrink-0 items-center border-t border-white bg-linear-to-r from-[#d4d0c8] to-white pr-0.5 pl-1">
          <span className="flex-1 pt-0.5">就绪</span>
          <IisSmall />
          <svg viewBox="0 0 8 12" className="h-3 w-2 self-end" fill="#808080">
            <path d="M5 1h2v2H5zM5 5h2v2H5zM5 9h2v2H5zM1 5h2v2H1zM1 9h2v2H1z" />
          </svg>
        </footer>
      </div>
    </div>
  );
}
